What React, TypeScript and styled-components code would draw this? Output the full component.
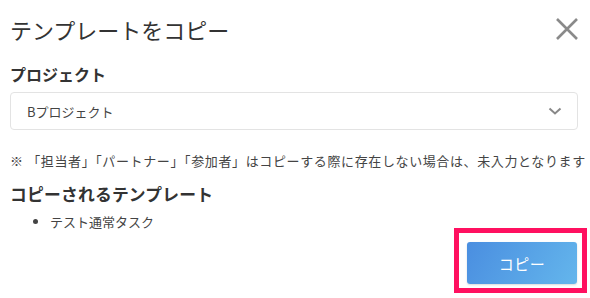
import React from "react";
import styled, { createGlobalStyle } from "styled-components";

const Global = createGlobalStyle`
  html, body { margin: 0; padding: 0; background: #fff; }
  body {
    font-family: "Noto Sans CJK JP", "Noto Sans", sans-serif;
    color: #333;
  }
  * { box-sizing: border-box; }
`;

const Dialog = styled.div`
  width: 590px;
  height: 298px;
  padding: 0 12px 0 10px;
  display: flex;
  flex-direction: column;
  position: relative;
  overflow: hidden;
`;

const Header = styled.div`
  display: flex;
  align-items: center;
  justify-content: space-between;
  height: 30px;
  margin-top: 14px;
`;

const Title = styled.h1`
  margin: 0;
  font-size: 22px;
  font-weight: 400;
  line-height: 30px;
  color: #333;
`;

const CloseButton = styled.button`
  border: 0;
  background: none;
  padding: 0;
  width: 26px;
  height: 26px;
  display: flex;
  align-items: center;
  justify-content: center;
  margin-right: -2px;
`;

const Label = styled.div`
  margin-top: 19px;
  font-size: 16px;
  font-weight: 700;
  line-height: 22px;
  color: #333;
`;

const Select = styled.div`
  margin-top: 7px;
  height: 38px;
  border: 1px solid #e3e3e3;
  border-radius: 4px;
  display: flex;
  align-items: center;
  justify-content: space-between;
  padding: 0 15px 0 16px;
  font-size: 13px;
  color: #444;
`;

const Note = styled.p`
  margin: 22px 0 0;
  font-size: 13px;
  line-height: 18px;
  letter-spacing: 0.62px;
  color: #444;
  white-space: nowrap;
`;

const SubHeading = styled.h2`
  margin: 12px 0 0;
  font-size: 16.8px;
  font-weight: 700;
  line-height: 24px;
  letter-spacing: 0.2px;
  color: #333;
`;

const List = styled.ul`
  margin: 7px 0 0;
  padding-left: 40px;
  font-size: 13px;
  line-height: 18px;
  color: #444;
`;

const Footer = styled.div`
  display: flex;
  justify-content: flex-end;
  margin-top: -3px;
`;

const Highlight = styled.div`
  border: 5px solid #ff1060;
  padding: 9px 5px 4px 8px;
  margin-right: -9px;
`;

const PrimaryButton = styled.button`
  display: block;
  width: 110px;
  height: 42px;
  border: 0;
  border-radius: 3px;
  background: linear-gradient(120deg, #4a8ee0 0%, #64b6ec 100%);
  color: #fff;
  font-family: inherit;
  font-size: 15px;
  letter-spacing: 0.5px;
  box-shadow: 0 1px 2px rgba(0,0,0,0.15);
`;

export default function App() {
  return (
    <>
      <Global />
      <Dialog>
        <Header>
          <Title>テンプレートをコピー</Title>
          <CloseButton aria-label="close">
            <svg width="24" height="24" viewBox="0 0 24 24">
              <path d="M2 2 L22 22 M22 2 L2 22" stroke="#8a8a8a" strokeWidth="2.6" fill="none" />
            </svg>
          </CloseButton>
        </Header>
        <Label>プロジェクト</Label>
        <Select>
          <span>Bプロジェクト</span>
          <svg width="14" height="8" viewBox="0 0 14 8">
            <path d="M1.5 1.5 L7 6.5 L12.5 1.5" stroke="#888" strokeWidth="2" fill="none" />
          </svg>
        </Select>
        <Note>※ 「担当者」「パートナー」「参加者」はコピーする際に存在しない場合は、未入力となります</Note>
        <SubHeading>コピーされるテンプレート</SubHeading>
        <List>
          <li>テスト通常タスク</li>
        </List>
        <Footer>
          <Highlight>
            <PrimaryButton>コピー</PrimaryButton>
          </Highlight>
        </Footer>
      </Dialog>
    </>
  );
}
